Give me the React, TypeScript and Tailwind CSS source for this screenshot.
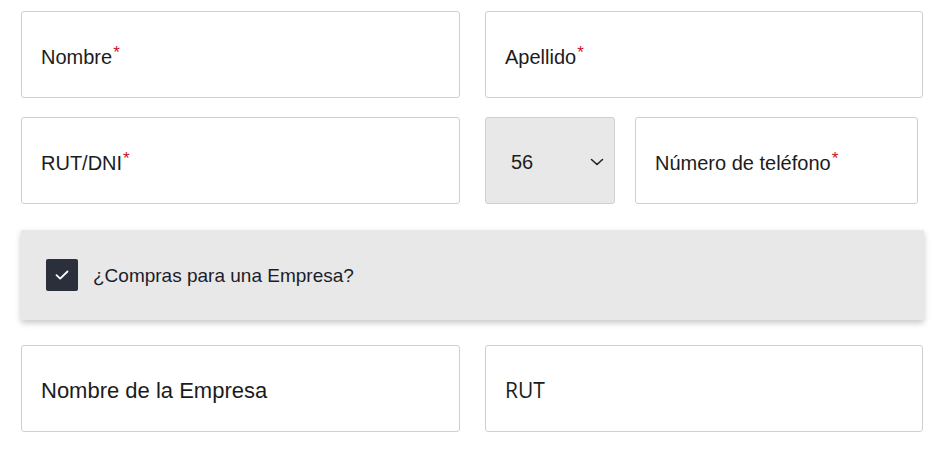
import React from "react";

function Field({ label, required, className = "", textClass = "text-[20px]" }: { label: string; required?: boolean; className?: string; textClass?: string }) {
  return (
    <div className={`flex h-[87px] items-center rounded-[3px] border border-[#cfcfcf] bg-white pl-[19px] pt-[4px] ${className}`}>
      <span className={`${textClass} leading-none text-[#1c1c1c]`}>
        {label}
        {required && <span className="relative -top-[6px] ml-[1px] text-[17px] text-[#cc1122]">*</span>}
      </span>
    </div>
  );
}

export default function App() {
  return (
    <div className="min-h-[449px] w-[946px] bg-white pl-[21px] pt-[11px] font-['Liberation_Sans',Arial,sans-serif]">
      <div className="w-[903px]">
        <div className="grid grid-cols-[439px_438px] gap-x-[25px] gap-y-[19px]">
          <Field label="Nombre" required />
          <Field label="Apellido" required />
          <Field label="RUT/DNI" required />
          <div className="flex gap-[20px]">
            <div className="flex h-[87px] w-[130px] items-center justify-between rounded-[3px] border border-[#cfcfcf] bg-[#e8e8e8] pl-[25px] pr-[10px] pt-[2px]">
              <span className="text-[20px] leading-none text-[#1c1c1c]">56</span>
              <svg width="14" height="8" viewBox="0 0 14 8" fill="none" stroke="#222" strokeWidth="1.6" strokeLinecap="round" strokeLinejoin="round">
                <path d="M1.5 1.5 L7 6.5 L12.5 1.5" />
              </svg>
            </div>
            <Field label="Número de teléfono" required className="w-[283px]" />
          </div>
        </div>

        <div className="mt-[26px] flex h-[90px] items-center gap-[15px] bg-[#e8e8e8] pl-[25px] shadow-[0_3px_6px_rgba(0,0,0,0.22)]">
          <div className="flex h-[32px] w-[32px] items-center justify-center rounded-[2px] bg-[#2b2f3b]">
            <svg width="16" height="12" viewBox="0 0 16 12" fill="none" stroke="#fff" strokeWidth="1.8" strokeLinecap="round" strokeLinejoin="round">
              <path d="M2.5 6.2 L6.2 9.6 L13.5 2.5" />
            </svg>
          </div>
          <span className="text-[19px] leading-none text-[#1c1c2a]">¿Compras para una Empresa?</span>
        </div>

        <div className="mt-[25px] grid grid-cols-[439px_438px] gap-x-[25px]">
          <Field label="Nombre de la Empresa" className="h-[86px]" textClass="text-[22px]" />
          <Field label="RUT" className="h-[86px]" textClass="text-[21px] font-['Open_Sans',sans-serif]" />
        </div>
      </div>
    </div>
  );
}
